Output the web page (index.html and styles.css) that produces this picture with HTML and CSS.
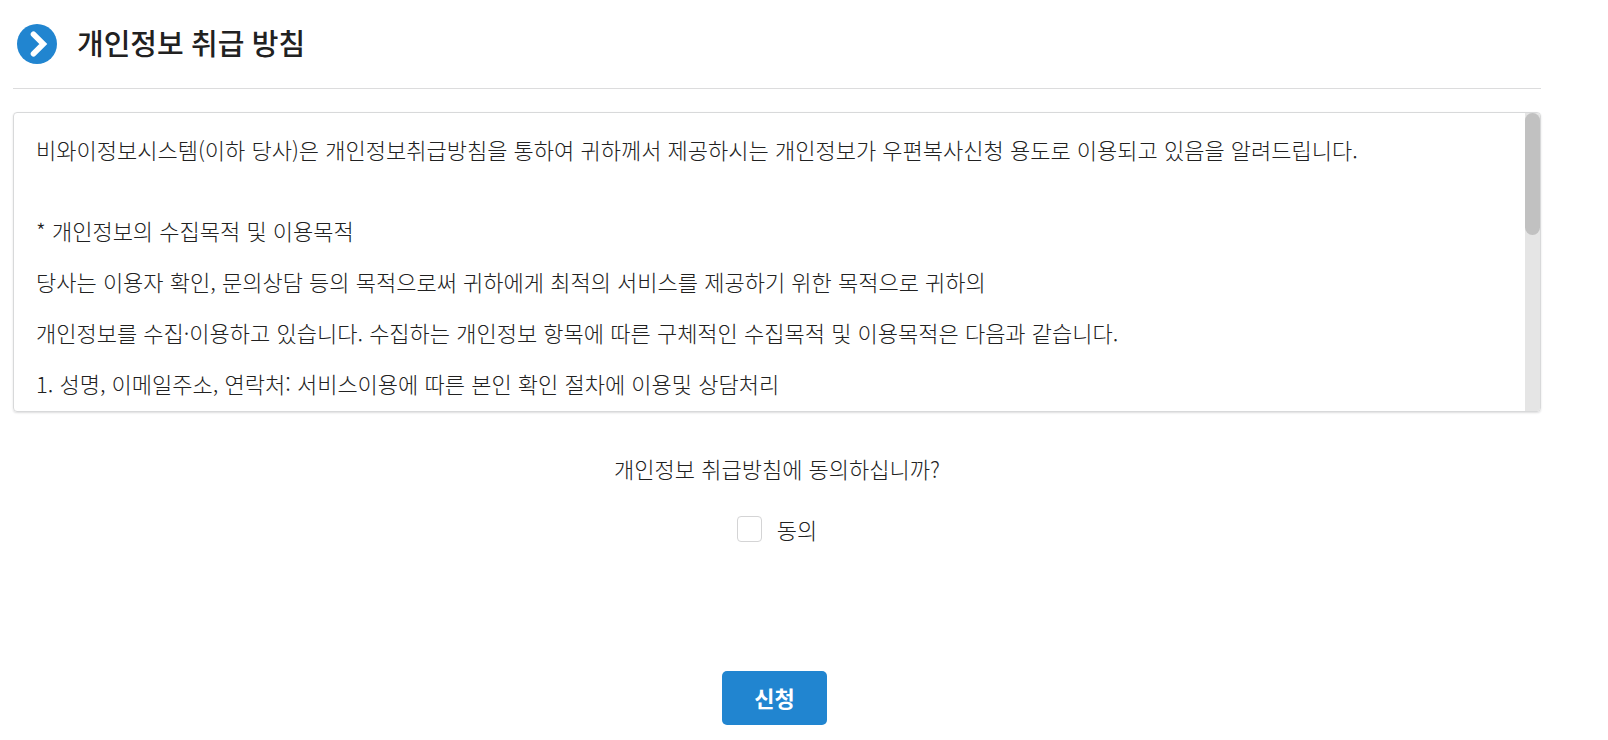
FILE: index.html
```html
<!DOCTYPE html>
<html lang="ko">
<head>
    <meta charset="UTF-8">
    <meta name="viewport" content="width=device-width, initial-scale=1.0">
    <title>개인정보 취급 방침</title>
    <link rel="stylesheet" href="styles.css">
</head>
<body>
    <header class="page-header">
        <svg class="header-icon" viewBox="0 0 40 40" aria-hidden="true">
            <circle cx="20" cy="20" r="20" fill="#2185d0"/>
            <path d="M16.5 10.2 L26.3 20 L16.5 29.8" fill="none" stroke="#fff" stroke-width="5.6" stroke-linecap="round"/>
        </svg>
        <h1>개인정보 취급 방침</h1>
    </header>

    <section class="policy">
        <div class="policy-text" tabindex="0">
            <p class="intro">비와이정보시스템(이하 당사)은 개인정보취급방침을 통하여 귀하께서 제공하시는 개인정보가 우편복사신청 용도로 이용되고 있음을 알려드립니다.</p>
            <p>* 개인정보의 수집목적 및 이용목적</p>
            <p>당사는 이용자 확인, 문의상담 등의 목적으로써 귀하에게 최적의 서비스를 제공하기 위한 목적으로 귀하의</p>
            <p>개인정보를 수집·이용하고 있습니다. 수집하는 개인정보 항목에 따른 구체적인 수집목적 및 이용목적은 다음과 같습니다.</p>
            <p>1. 성명, 이메일주소, 연락처: 서비스이용에 따른 본인 확인 절차에 이용및 상담처리</p>
        </div>
        <div class="scroll-track">
            <div class="scroll-thumb"></div>
        </div>
    </section>

    <form class="agree-form">
        <p class="question">개인정보 취급방침에 동의하십니까?</p>
        <div class="agree">
            <input type="checkbox" id="agree" name="agree">
            <label for="agree">동의</label>
        </div>
        <button type="button" class="submit">신청</button>
    </form>
</body>
</html>
```
FILE: styles.css
```css
* {
    box-sizing: border-box;
}
body {
    margin: 0;
    padding: 0 67px 0 13px;
    background: #fff;
    color: #212121;
    font-family: "Noto Sans CJK KR", sans-serif;
    font-size: 22px;
    font-weight: 300;
}
h1, p {
    margin: 0;
}
.page-header {
    display: flex;
    align-items: center;
    gap: 20px;
    height: 89px;
    padding-left: 4px;
    border-bottom: 1px solid #dcdcdd;
}
.header-icon {
    width: 40px;
    height: 40px;
}
h1 {
    font-family: Lato, "Noto Sans CJK KR", sans-serif;
    font-size: 29px;
    font-weight: 500;
    line-height: 40px;
}
.policy {
    display: flex;
    height: 300px;
    margin-top: 23px;
    overflow: hidden;
    border: 1px solid #d8d9da;
    border-radius: 4px;
    box-shadow: 0 1px 2px rgba(34, 36, 38, 0.15);
}
.policy-text {
    flex: 1;
    padding: 11px 22px;
    overflow-y: auto;
    scrollbar-width: none;
    line-height: 51px;
}
.intro {
    margin-bottom: 30px;
}
.scroll-track {
    width: 15px;
    background: #e5e5e5;
}
.scroll-thumb {
    height: 41%;
    background: #c1c1c1;
    border-radius: 8px;
}
.agree-form {
    display: flex;
    flex-direction: column;
    align-items: center;
    padding-top: 39px;
    line-height: 34px;
}
.agree {
    display: flex;
    align-items: center;
    gap: 15px;
    margin-top: 27px;
}
.agree input {
    appearance: none;
    width: 25px;
    height: 26px;
    margin: 0;
    border: 1px solid #d4d4d5;
    border-radius: 4px;
    background: #fff;
}
.agree input:checked {
    background: #2185d0;
}
.submit {
    height: 54px;
    margin: 125px 5px 0 0;
    padding: 0 32px 2px;
    border: 0;
    border-radius: 5px;
    background: #2185d0;
    color: #fff;
    font-family: inherit;
    font-size: 22px;
    font-weight: 700;
    cursor: pointer;
}
```
